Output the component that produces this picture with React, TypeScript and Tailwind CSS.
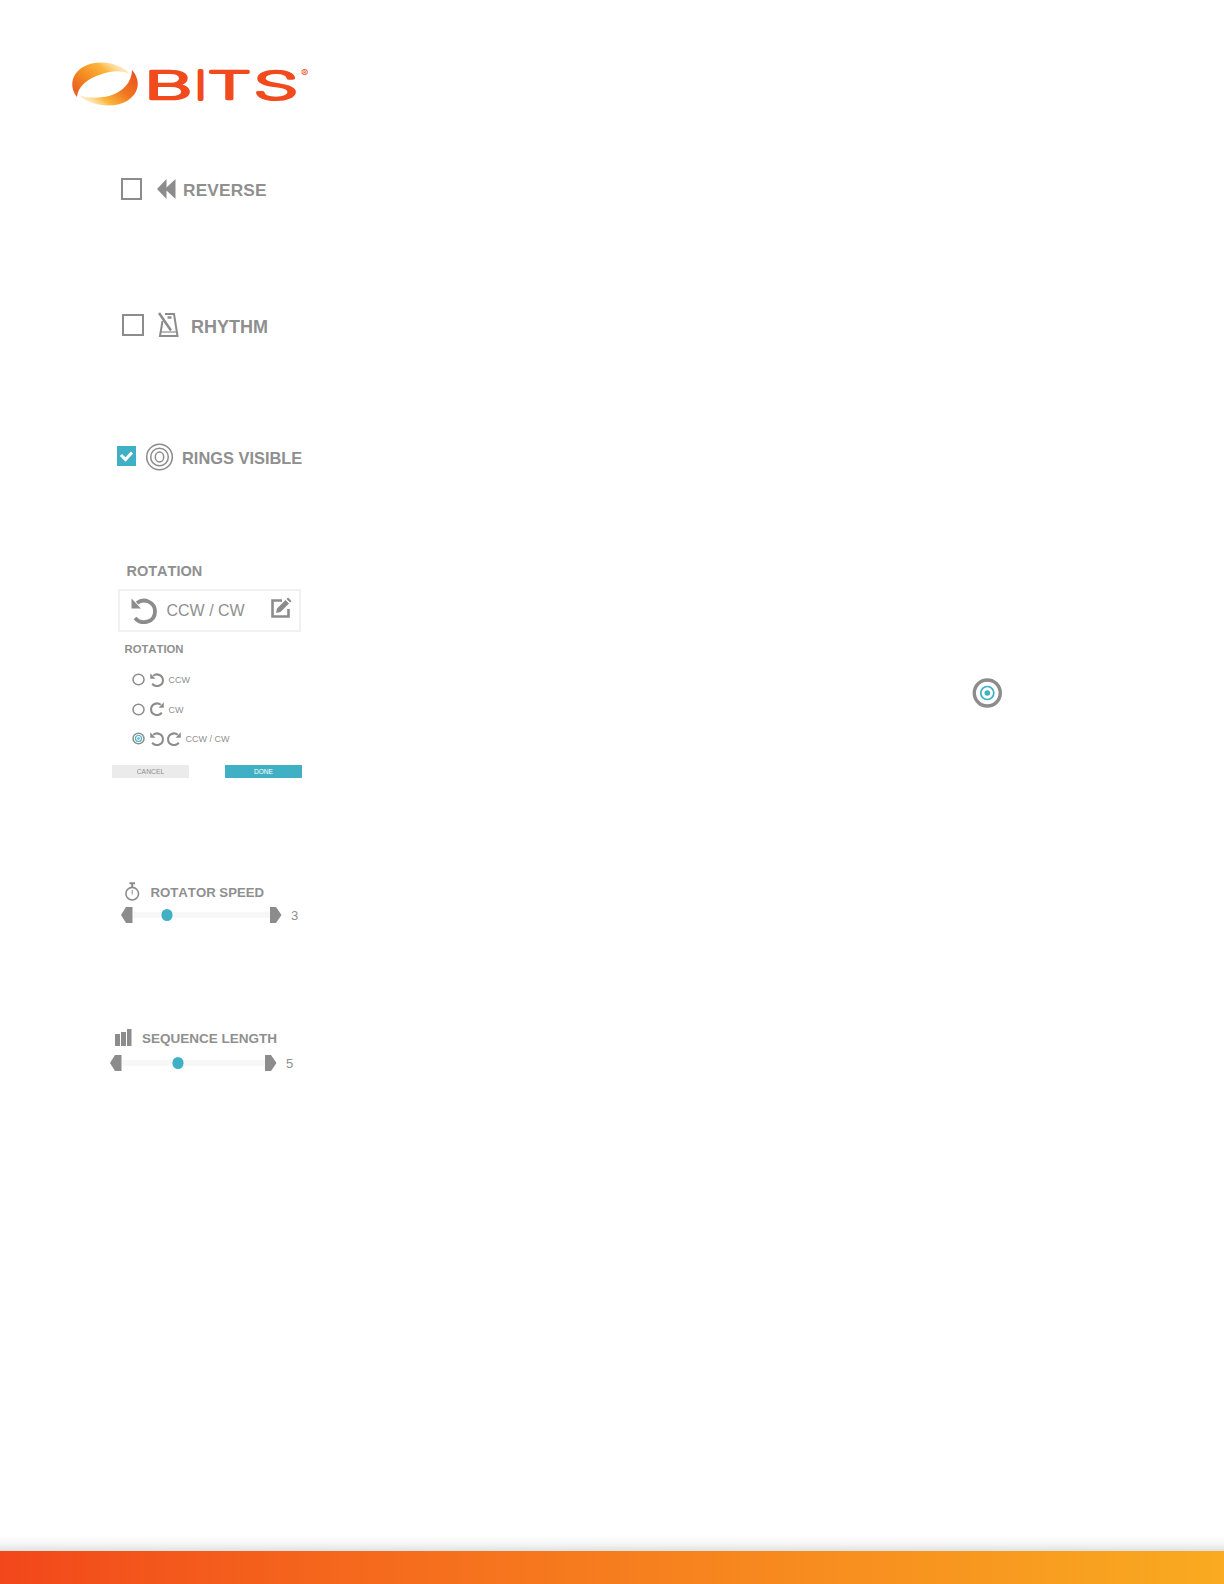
import type { ReactNode } from 'react';

const GREY = '#8c8c8c';
const TEAL = '#40b1c4';

function Logo() {
  return (
    <svg width="250" height="60" viewBox="0 0 250 60" className="block">
      <defs>
        <linearGradient id="swirlTop" x1="0" y1="0.7" x2="1" y2="0">
          <stop offset="0" stopColor="#ea641f" />
          <stop offset="0.3" stopColor="#f48d22" />
          <stop offset="0.6" stopColor="#fbb43c" />
          <stop offset="1" stopColor="#fff3c4" stopOpacity="0.3" />
        </linearGradient>
        <linearGradient id="swirlBottom" x1="1" y1="0.2" x2="0" y2="1">
          <stop offset="0" stopColor="#ea551f" />
          <stop offset="0.35" stopColor="#f17620" />
          <stop offset="0.65" stopColor="#fbb53b" />
          <stop offset="1" stopColor="#fff3c4" stopOpacity="0.2" />
        </linearGradient>
      </defs>
      <path d="M7 40C0 31 0 18 13 10C27 2 50 5 60 17C50 13 42 14 32 17C18 21 8 29 7 40Z" fill="url(#swirlTop)" />
      <path d="M62 13C70 22 71 35 57 44C43 52 20 49 9 38C18 42 30 41 39 39C53 35 62 25 62 13Z" fill="url(#swirlBottom)" />
      <g fontFamily="Inter, sans-serif" fontWeight="200" fontSize="38" fill="#f04a1d" stroke="#f04a1d" strokeWidth="2.7" strokeLinejoin="round">
        <text transform="translate(74 42.4) scale(1.98 1)">B</text>
        <text transform="translate(125.8 42.4)" strokeWidth="4">I</text>
        <text transform="translate(137.5 42.4) scale(1.84 1)">T</text>
        <text transform="translate(183.5 42.4) scale(1.9 1)">S</text>
      </g>
      <text x="231" y="20" fontFamily="Inter, sans-serif" fontSize="11" fill="#f04a1d">®</text>
    </svg>
  );
}

function Turn({ size, cw = false }: { size: number; cw?: boolean }) {
  return (
    <svg width={size} height={size} viewBox="0 0 26 26" className="block shrink-0">
      <g transform={cw ? 'translate(26 0) scale(-1 1)' : undefined}>
        <path d="M6 5C13 -0.5 24 4 24 13.5C24 24.5 10.5 27.5 4 20" fill="none" stroke={GREY} strokeWidth="3.8" />
        <path d="M0.5 0.5V10.5H10Z" fill={GREY} />
      </g>
    </svg>
  );
}

function Radio({ checked = false }: { checked?: boolean }) {
  return (
    <svg width="13" height="13" viewBox="0 0 13 13" className="block shrink-0">
      <ellipse cx="6.5" cy="6.5" rx="5.5" ry="5.2" fill="none" stroke={GREY} strokeWidth="1.5" />
      {checked && <circle cx="6.5" cy="6.5" r="3" fill="none" stroke={TEAL} strokeWidth="1.1" />}
      {checked && <circle cx="6.5" cy="6.5" r="1.2" fill={TEAL} />}
    </svg>
  );
}

function Option({ label, checked, children }: { label: string; checked?: boolean; children: ReactNode }) {
  return (
    <div className="flex h-[29.5px] items-center pl-[22px]">
      <Radio checked={checked} />
      <div className="ml-[5px] flex gap-[3px]">{children}</div>
      <span className="ml-[4.5px] mt-[2px] text-[9px] leading-none">{label}</span>
    </div>
  );
}

function Slider({ value, pos, className }: { value: number; pos: number; className: string }) {
  return (
    <div className={`flex items-center ${className}`}>
      <svg width="12" height="16" viewBox="0 0 12 16" className="block"><path d="M5 0H11.5V16H5L0 8Z" fill={GREY} /></svg>
      <div className="relative h-[6px] flex-1 bg-[#f7f7f7]">
        <div className="absolute -top-[3px] h-[12px] w-[11px] -translate-x-1/2 rounded-full bg-[#40b1c4]" style={{ left: pos }} />
      </div>
      <svg width="12" height="16" viewBox="0 0 12 16" className="block"><path d="M0 0H6L11.5 8L6 16H0Z" fill={GREY} /></svg>
      <span className="ml-[9px] w-[9px] text-[13px] leading-none">{value}</span>
    </div>
  );
}

export default function App() {
  return (
    <div className="flex h-[1584px] w-[1224px] flex-col bg-white font-['Liberation_Sans',Arial,sans-serif] text-[#8f8f8f] [font-kerning:none]">
      <header className="h-[175px] pl-[70px] pt-[57px]"><Logo /></header>

      <main className="flex-1 pl-[110px]">
        <div className="flex h-[28px] items-center pl-[11px]">
          <div className="-mt-px h-[22px] w-[21px] border-2 border-[#8c8c8c]" />
          <svg width="19" height="20" viewBox="0 0 19 20" className="ml-[15px]"><path d="M0 10L9.5 0V8.5L18.5 0V20L9.5 11.5V20Z" fill={GREY} /></svg>
          <span className="ml-[7px] mt-[3px] text-[17.3px] font-bold leading-none tracking-[0.15px]">REVERSE</span>
        </div>

        <div className="mt-[108px] flex h-[28px] items-center pl-[12px]">
          <div className="size-[22px] border-2 border-[#8c8c8c]" />
          <svg width="21" height="26" viewBox="0 0 21 26" className="ml-[14px]" fill="none" stroke={GREY}>
            <path d="M7 2H16L19.5 24H2L4.5 9" strokeWidth="2" />
            <path d="M1 1L13 18.5" strokeWidth="2.5" />
            <path d="M2 20H18.5" strokeWidth="1.2" />
            <path d="M9.5 5.5H13.5" strokeWidth="2.4" />
          </svg>
          <span className="ml-[12px] mt-[4px] text-[18px] font-bold leading-none">RHYTHM</span>
        </div>

        <div className="mt-[104px] flex h-[28px] items-center pl-[7px]">
          <div className="-mt-[2px] h-[20px] w-[19px] bg-[#40b1c4]">
            <svg width="19" height="19" viewBox="0 0 19 19"><path d="M4 9L8.5 13.5L15 6.5" fill="none" stroke="#fff" strokeWidth="3" /></svg>
          </div>
          <svg width="28" height="28" viewBox="0 0 28 28" className="ml-[9px]" fill="none" stroke={GREY} strokeWidth="1.5">
            <circle cx="14.5" cy="14" r="12.8" />
            <circle cx="14.5" cy="14" r="8.8" />
            <ellipse cx="14.5" cy="14" rx="4.2" ry="5" />
          </svg>
          <span className="ml-[9px] mt-[3px] text-[16.4px] font-bold leading-none">RINGS VISIBLE</span>
        </div>

        <h2 className="mt-[93px] pl-[16.5px] text-[14.5px] font-bold leading-[15px]">ROTATION</h2>
        <div className="ml-[8px] mt-[10px] flex h-[43px] w-[183px] items-center border-2 border-[#f1f1f1] pl-[11px]">
          <Turn size={26} />
          <span className="ml-[9.5px] w-[79px] text-[16px] leading-none">CCW / CW</span>
          <svg width="22" height="22" viewBox="0 0 22 22" className="-mt-[5px] ml-[24.5px]">
            <path d="M12 3.5H2.5V19.5H18.5V12" fill="none" stroke={GREY} strokeWidth="2.6" />
            <path d="M6 16L7 11.5L15.5 3L19 6.5L10.5 15ZM16.5 2L18 0.5L21.5 4L20 5.5Z" fill={GREY} />
          </svg>
        </div>

        <h3 className="mt-[11px] h-[12px] pl-[14.5px] text-[11.3px] font-bold leading-[12px]">ROTATION</h3>
        <div className="mt-[10px] flex">
          <div className="w-[862px]">
            <Option label="CCW"><Turn size={14} /></Option>
            <Option label="CW"><Turn size={14} cw /></Option>
            <Option label="CCW / CW" checked><Turn size={14} /><Turn size={14} cw /></Option>
          </div>
          <svg width="30" height="30" viewBox="0 0 30 30" className="mt-[13px]" fill="none">
            <circle cx="15.3" cy="15" r="13" stroke={GREY} strokeWidth="3.4" />
            <circle cx="15.3" cy="15" r="6.5" stroke={TEAL} strokeWidth="1.7" />
            <circle cx="15.3" cy="15" r="2.8" fill={TEAL} />
          </svg>
        </div>
        <div className="mt-[11.5px] flex gap-[36px] pl-[2px]">
          <button className="h-[13px] w-[77px] bg-[#ebebeb] text-[6.8px] leading-[13px]">CANCEL</button>
          <button className="h-[13px] w-[77px] bg-[#40b1c4] text-[6.6px] leading-[13px] text-white">DONE</button>
        </div>

        <div className="mt-[103px] flex h-[20px] items-center pl-[15px]">
          <svg width="15" height="19" viewBox="0 0 15 19" fill="none" stroke={GREY}>
            <circle cx="7.2" cy="11.7" r="6.3" strokeWidth="1.6" />
            <path d="M4.5 1.2H10M7.2 1V5" strokeWidth="2" />
            <path d="M7.2 8V12.5" strokeWidth="1" />
          </svg>
          <span className="ml-[10.5px] mt-[3px] text-[13.2px] font-bold leading-none">ROTATOR SPEED</span>
        </div>
        <Slider value={3} pos={34} className="ml-[11px] mt-[6px] w-[179px]" />

        <div className="mt-[106px] flex h-[18px] items-center pl-[5px]">
          <svg width="17" height="18" viewBox="0 0 17 18" fill={GREY}><path d="M0 5H5V17H0ZM6 3H11V17H6ZM12 0H16.5V17H12Z" /></svg>
          <span className="ml-[10px] mt-[2px] text-[13.5px] font-bold leading-none">SEQUENCE LENGTH</span>
        </div>
        <Slider value={5} pos={56} className="mt-[8px] w-[185px]" />
      </main>

      <footer>
        <div className="h-[15px] bg-linear-to-b from-white via-[#f6f6f6] to-[#e0e2e2]" />
        <div className="h-[33px] bg-linear-to-r from-[#f2471b] via-[#f67d1e] to-[#f9aa20]" />
      </footer>
    </div>
  );
}
